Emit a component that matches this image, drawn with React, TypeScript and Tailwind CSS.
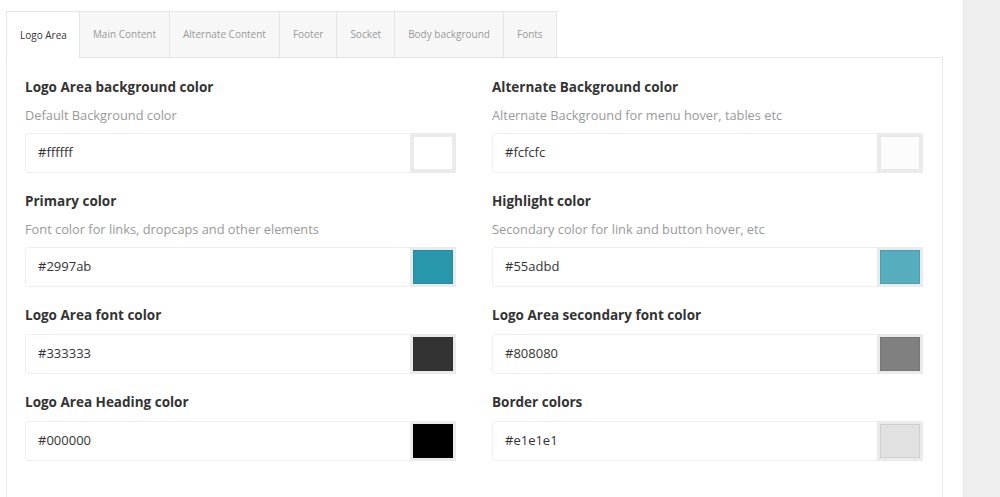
import React from "react";

const tabs = [
  "Logo Area",
  "Main Content",
  "Alternate Content",
  "Footer",
  "Socket",
  "Body background",
  "Fonts",
];

interface Field {
  title: string;
  desc?: string;
  value: string;
}

const rows: Field[][] = [
  [
    { title: "Logo Area background color", desc: "Default Background color", value: "#ffffff" },
    { title: "Alternate Background color", desc: "Alternate Background for menu hover, tables etc", value: "#fcfcfc" },
  ],
  [
    { title: "Primary color", desc: "Font color for links, dropcaps and other elements", value: "#2997ab" },
    { title: "Highlight color", desc: "Secondary color for link and button hover, etc", value: "#55adbd" },
  ],
  [
    { title: "Logo Area font color", value: "#333333" },
    { title: "Logo Area secondary font color", value: "#808080" },
  ],
  [
    { title: "Logo Area Heading color", value: "#000000" },
    { title: "Border colors", value: "#e1e1e1" },
  ],
];

function ColorField({ field }: { field: Field }) {
  return (
    <div className="flex flex-col">
      <div className="text-[13.5px] font-bold leading-[18px] text-[#333] mb-[10px]">{field.title}</div>
      {field.desc && (
        <div className="text-[12.8px] leading-[18px] text-[#999] mb-[9px]">{field.desc}</div>
      )}
      <div className="flex h-[40px] rounded-[3px] border border-[#efefef] bg-white">
        <div className="flex-1 flex items-center pl-[12px] text-[13px] text-[#333]">{field.value}</div>
        <div className="w-[46px] bg-[#ebebeb] p-[3px] -my-px -mr-px h-[40px]">
          <div
            className="w-full h-full border border-[rgba(0,0,0,0.08)]"
            style={{ backgroundColor: field.value }}
          />
        </div>
      </div>
    </div>
  );
}

export default function App() {
  return (
    <div className="flex min-h-[497px] bg-white" style={{ fontFamily: '"Open Sans", "Noto Sans", sans-serif' }}>
      <div className="w-[963px] pl-[6px] pt-[11px]">
        {/* Tabs */}
        <div className="flex h-[47px] relative z-10">
          {tabs.map((tab, i) => (
            <div
              key={tab}
              className={
                i === 0
                  ? "flex items-center pl-[13px] pr-[12px] bg-white border-l border-t border-[#e5e5e5] text-[10px] text-[#333] h-[47px]"
                  : "flex items-center px-[13px] bg-[#f7f7f7] border-l border-t border-b border-[#e5e5e5] text-[10px] text-[#999] h-[47px] last:border-r"
              }
            >
              {tab}
            </div>
          ))}
        </div>

        {/* Panel */}
        <div className="w-[937px] -mt-px border border-[#e8e8e8] px-[18px] pt-[20px] pb-[40px] min-h-[440px]">
          <div className="grid grid-cols-[431px_431px] gap-x-[36px] gap-y-[19px]">
            {rows.map((row, ri) =>
              row.map((field, ci) => <ColorField key={`${ri}-${ci}`} field={field} />)
            )}
          </div>
        </div>
      </div>
      <div className="flex-1 bg-[#efefef] border-l border-[#e6e6e6]" />
    </div>
  );
}
